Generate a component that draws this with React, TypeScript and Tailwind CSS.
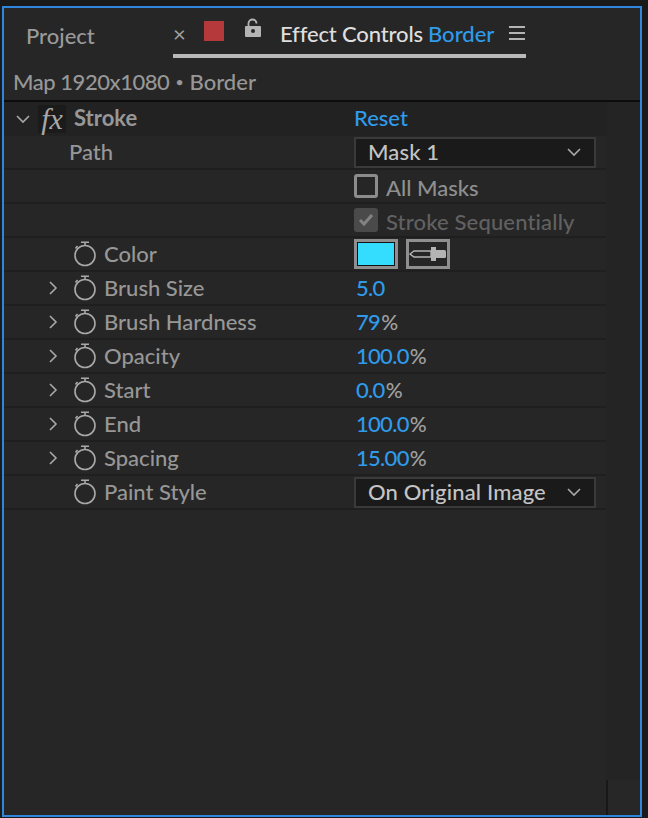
import type { ReactNode } from "react"

/* ===== Icons ===== */
function Chevron({ down = false }: { down?: boolean }) {
  return (
    <svg width="16" height="16" viewBox="0 0 16 16" fill="none" stroke="#a8a8a8" strokeWidth="1.6" className="block">
      {down ? <path d="M2 5l6 6 6-6" /> : <path d="M5 2l6 6-6 6" />}
    </svg>
  )
}

function Stopwatch() {
  return (
    <svg width="24" height="28" viewBox="0 0 24 28" fill="none" stroke="#a9a9a9" strokeWidth="1.6" className="block">
      <circle cx="12" cy="15.5" r="10" />
      <path d="M8 2.2h8M12 2.2v3.2" />
      <path d="M2.5 8.5l2-2.5" />
    </svg>
  )
}

function Eyedropper() {
  return (
    <svg width="38" height="14" viewBox="0 0 38 14" className="block">
      <path d="M1 7l4-3h17v6H5z" fill="none" stroke="#b4b4b4" strokeWidth="1.4" />
      <rect x="22" y="0" width="5" height="14" fill="#b4b4b4" />
      <rect x="26" y="3" width="11" height="8" rx="1.5" fill="#b4b4b4" />
    </svg>
  )
}

/* ===== Rows ===== */
type RowProps = {
  label?: string
  expandable?: boolean
  stopwatch?: boolean
  children?: ReactNode
}

function Row({ label, expandable, stopwatch, children }: RowProps) {
  return (
    <div className="flex h-[34px] items-center border-b-2 border-[#1f1f1f]">
      <div className="flex w-[350px] items-center">
        <div className="flex w-[57px] justify-end">{expandable && <Chevron />}</div>
        <div className="ml-[12px] w-[24px]">{stopwatch && <Stopwatch />}</div>
        <span className="ml-[7px] font-medium text-[#979797]">{label}</span>
      </div>
      {children}
    </div>
  )
}

function Value({ value, unit }: { value: string; unit?: string }) {
  return (
    <span className="ml-[2px] font-medium">
      <span className="tracking-[-0.7px] text-[#2f9bea]">{value}</span>
      {unit && <span className="ml-[1px] text-[21px] text-[#a0a0a0] tracking-[1px]">{unit}</span>}
    </span>
  )
}

function Select({ value }: { value: string }) {
  return (
    <div className="flex h-[31px] w-[242px] items-center justify-between border-2 border-[#3a3a3a] bg-[#1a1a1a] pl-[12px] pr-[12px] font-medium tracking-[0.15px] text-[#c4c4c4]">
      <span>{value}</span>
      <Chevron down />
    </div>
  )
}

const numericRows = [
  { label: "Brush Size", value: "5.0" },
  { label: "Brush Hardness", value: "79", unit: "%" },
  { label: "Opacity", value: "100.0", unit: "%" },
  { label: "Start", value: "0.0", unit: "%" },
  { label: "End", value: "100.0", unit: "%" },
  { label: "Spacing", value: "15.00", unit: "%" },
]

/* ===== Main Page ===== */
export default function App() {
  return (
    <div className="h-[818px] w-[648px] bg-[#1a1a1a] pl-[2px] pt-[6px] font-['Lato',sans-serif] text-[22px] leading-none">
      <div className="flex h-[811px] w-[640px] flex-col border-2 border-[#2f86dc] bg-[#262626]">
        {/* Tabs */}
        <div className="flex h-[50px] items-center">
          <span className="ml-[22px] w-[147px] pt-[5px] font-medium text-[#9a9a9a]">Project</span>
          <div className="flex h-full w-[353px] items-center whitespace-nowrap border-b-4 border-[#b9b9b9]">
            <span className="w-[31px] pt-[5px] text-[#a0a0a0]">×</span>
            <div className="h-[20px] w-[20px] bg-[#b5383a]" />
            <svg width="16" height="20" viewBox="0 0 16 20" className="ml-[21px] mb-[6px]">
              <path d="M3.5 9V5.5a4 4 0 0 1 8 0" fill="none" stroke="#b4b4b4" strokeWidth="1.8" />
              <rect y="8" width="16" height="11" rx="1" fill="#b4b4b4" />
              <circle cx="8" cy="13" r="2" fill="#262626" />
            </svg>
            <span className="ml-[19px] w-[148px] pt-[5px] font-medium tracking-[-0.15px] text-[#dedede]">Effect Controls</span>
            <span className="w-[66px] pt-[5px] font-medium text-[#2f9bea]">Border</span>
            <div className="ml-[15px] flex w-[16px] flex-col gap-[4px] pt-[3px]">
              <div className="h-[2px] bg-[#b4b4b4]" />
              <div className="h-[2px] bg-[#b4b4b4]" />
              <div className="h-[2px] bg-[#b4b4b4]" />
            </div>
          </div>
        </div>

        {/* Comp name */}
        <div className="flex h-[44px] items-center border-b-2 border-[#0c0c0c] pl-[9px] pt-[5px] font-medium text-[#979797]">
          <span className="tracking-[-0.45px]">Map 1920x1080</span>
          <span className="mx-[6px] text-[14px]">•</span>
          <span>Border</span>
        </div>

        {/* Effect rows */}
        <div className="flex flex-1">
          <div className="flex w-[602px] flex-col">
            <div className="flex h-[34px] items-center bg-[#222222]">
              <div className="ml-[11px]"><Chevron down /></div>
              <div className="ml-[7px] flex h-[28px] w-[28px] items-center justify-center bg-[#1b1b1b] font-['Liberation_Serif',serif] text-[30px] italic text-[#a8a8a8]">
                fx
              </div>
              <span className="ml-[8px] w-[280px] pb-[2px] font-bold text-[#979797]">Stroke</span>
              <span className="pb-[2px] font-medium text-[#2f9bea]">Reset</span>
            </div>
            <div className="flex h-[34px] items-center border-b-2 border-[#1f1f1f]">
              <span className="ml-[65px] w-[285px] font-medium text-[#979797]">Path</span>
              <Select value="Mask 1" />
            </div>
            <Row>
              <div className="flex items-center gap-[8px] font-medium text-[#8f8f8f]">
                <div className="h-[24px] w-[24px] rounded-[3px] border-[3px] border-[#8c8c8c]" />
                <span className="pt-[3px]">All Masks</span>
              </div>
            </Row>
            <Row>
              <div className="flex items-center gap-[8px] font-medium tracking-[0.15px] text-[#616161]">
                <div className="flex h-[24px] w-[24px] items-center justify-center rounded-[3px] bg-[#4a4a4a]">
                  <svg width="16" height="14" viewBox="0 0 16 14" fill="none" stroke="#838383" strokeWidth="3">
                    <path d="M2 7l4 4 8-9" />
                  </svg>
                </div>
                <span className="pt-[3px]">Stroke Sequentially</span>
              </div>
            </Row>
            <Row label="Color" stopwatch>
              <div className="flex items-center gap-[8px]">
                <div className="h-[30px] w-[44px] border-[3px] border-[#8f8f8f] bg-[#34dcfd] outline outline-1 -outline-offset-4 outline-[#111111]" />
                <div className="flex h-[30px] w-[44px] items-center justify-center border-[3px] border-[#8f8f8f]">
                  <Eyedropper />
                </div>
              </div>
            </Row>
            {numericRows.map((row) => (
              <Row key={row.label} label={row.label} expandable stopwatch>
                <Value value={row.value} unit={row.unit} />
              </Row>
            ))}
            <Row label="Paint Style" stopwatch>
              <Select value="On Original Image" />
            </Row>
          </div>

          {/* Scrollbar */}
          <div className="flex flex-1 flex-col">
            <div className="h-[678px] bg-[#242424]" />
            <div className="flex-1 border-l-2 border-[#181818] bg-[#272727]" />
          </div>
        </div>
      </div>
    </div>
  )
}
